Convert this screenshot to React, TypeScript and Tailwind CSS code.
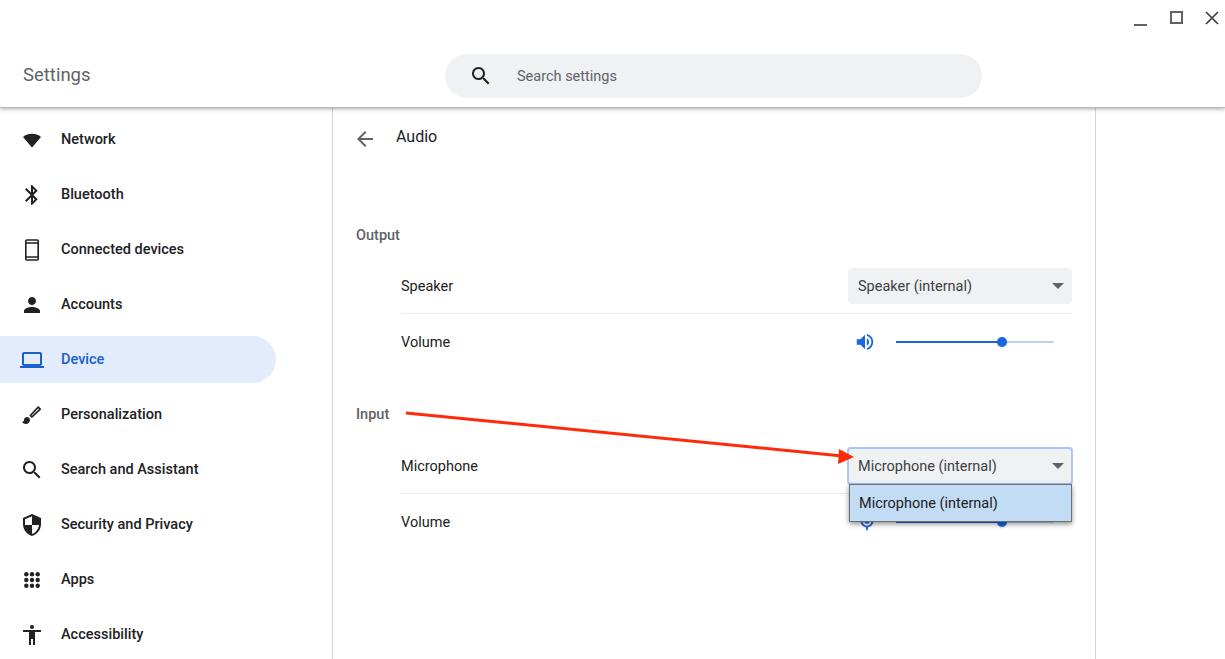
import type { ReactNode } from 'react';

const Icon = ({ d, className = 'w-6 h-6' }: { d: string; className?: string }) => (
  <svg viewBox="0 0 24 24" className={className} fill="currentColor">
    <path d={d} />
  </svg>
);

const searchPath = 'M15.5 14h-.79l-.28-.27C15.41 12.59 16 11.11 16 9.5 16 5.91 13.09 3 9.5 3S3 5.91 3 9.5 5.91 16 9.5 16c1.61 0 3.09-.59 4.23-1.57l.27.28v.79l5 4.99L20.49 19l-4.99-5zm-6 0C7.01 14 5 11.99 5 9.5S7.01 5 9.5 5 14 7.01 14 9.5 11.99 14 9.5 14z';
const volumePath = 'M3 9v6h4l5 5V4L7 9H3zm13.5 3c0-1.77-1.02-3.29-2.5-4.03v8.05c1.48-.73 2.5-2.25 2.5-4.02zM14 3.23v2.06c2.89.86 5 3.54 5 6.71s-2.11 5.85-5 6.71v2.06c4.01-.91 7-4.49 7-8.77s-2.99-7.86-7-8.77z';
const micPath = 'M12 14c1.66 0 3-1.34 3-3V5c0-1.66-1.34-3-3-3S9 3.34 9 5v6c0 1.66 1.34 3 3 3zm-1-9c0-.55.45-1 1-1s1 .45 1 1v6c0 .55-.45 1-1 1s-1-.45-1-1V5zm6 6c0 2.76-2.24 5-5 5s-5-2.24-5-5H5c0 3.53 2.61 6.43 6 6.92V21h2v-3.08c3.39-.49 6-3.39 6-6.92h-2z';

const navItems: { label: string; icon: ReactNode; active?: boolean }[] = [
  { label: 'Network', icon: <Icon d="M12 19.5 L3 9 C5.6 7 8.6 5.8 12 5.8 C15.4 5.8 18.4 7 21 9 Z" /> },
  { label: 'Bluetooth', icon: <Icon d="M17.71 7.71L12 2h-1v7.59L6.41 5 5 6.41 10.59 12 5 17.59 6.41 19 11 14.41V22h1l5.71-5.71-4.3-4.29 4.3-4.29zM13 5.83l1.88 1.88L13 9.59V5.83zm1.88 10.46L13 18.17v-3.76l1.88 1.88z" /> },
  {
    label: 'Connected devices',
    icon: (
      <svg viewBox="0 0 24 24" className="w-6 h-6" fill="none" stroke="currentColor" strokeWidth="1.6">
        <rect x="5.8" y="2" width="12.4" height="20" rx="1" />
        <path d="M6 5h12M6 19h12" />
      </svg>
    ),
  },
  { label: 'Accounts', icon: <Icon d="M12 12c2.21 0 4-1.79 4-4s-1.79-4-4-4-4 1.79-4 4 1.79 4 4 4zm0 2c-2.67 0-8 1.34-8 4v2h16v-2c0-2.66-5.33-4-8-4z" /> },
  { label: 'Device', active: true, icon: <Icon d="M20 18c1.1 0 1.99-.9 1.99-2L22 6c0-1.1-.9-2-2-2H4c-1.1 0-2 .9-2 2v10c0 1.1.9 2 2 2H0v2h24v-2h-4zM4 6h16v10H4V6z" /> },
  {
    label: 'Personalization',
    icon: (
      <svg viewBox="0 0 24 24" className="w-6 h-6" fill="currentColor">
        <path d="M7 14c-1.66 0-3 1.34-3 3 0 1.31-1.16 2-2 2 .92 1.22 2.49 2 4 2 2.21 0 4-1.79 4-4 0-1.66-1.34-3-3-3z" />
        <path d="M10.4 12.5 L18.2 4.2 L20.2 6.2 L11.9 14 Z" fill="none" stroke="currentColor" strokeWidth="1.7" strokeLinejoin="round" />
      </svg>
    ),
  },
  { label: 'Search and Assistant', icon: <Icon d={searchPath} /> },
  { label: 'Security and Privacy', icon: <Icon d="M12 1L3 5v6c0 5.55 3.84 10.74 9 12 5.16-1.26 9-6.45 9-12V5l-9-4zm0 10.99h7c-.53 4.12-3.28 7.79-7 8.94V12H5V6.3l7-3.11v8.8z" /> },
  {
    label: 'Apps',
    icon: (
      <svg viewBox="0 0 24 24" className="w-6 h-6" fill="currentColor">
        {[6.3, 12, 17.7].map((y) =>
          [6.3, 12, 17.7].map((x) => <circle key={`${x}-${y}`} cx={x} cy={y} r="2.2" />)
        )}
      </svg>
    ),
  },
  { label: 'Accessibility', icon: <Icon d="M12 2c1.1 0 2 .9 2 2s-.9 2-2 2-2-.9-2-2 .9-2 2-2zm9 7h-6v13h-2v-6h-2v6H9V9H3V7h18v2z" /> },
];

const Caret = () => (
  <span className="w-0 h-0 border-x-[6px] border-x-transparent border-t-[6px] border-t-[#5f6368]" />
);

const Slider = ({ icon, iconClass }: { icon: string; iconClass: string }) => (
  <div className="flex items-center w-[224px]">
    <div className={`w-[48px] text-[#1a66e0] ${iconClass}`}>
      <Icon d={icon} className="w-[22px] h-[22px]" />
    </div>
    <div className="relative w-[158px] h-[2px] bg-[#bcd2f5]">
      <div className="h-full w-[106px] bg-[#1a66e0]" />
      <div className="absolute left-[101px] top-[-4px] w-[10px] h-[10px] rounded-full bg-[#1a66e0] shadow-sm" />
    </div>
  </div>
);

export default function App() {
  return (
    <div className="relative h-[659px] w-[1225px] overflow-hidden bg-white text-[#202124] font-['Roboto',sans-serif] text-[14.5px]">
      <header className="relative z-10 h-[108px] border-b border-[#b9babc] bg-white shadow-[0_1px_4px_rgba(60,64,67,0.45)]">
        <div className="flex h-[54px] justify-end text-[#5f6368]">
          <div className="flex h-[38px] items-center gap-[15px] pr-[2px]">
            <svg viewBox="0 0 21 21" className="w-[21px] h-[21px]" fill="none" stroke="currentColor" strokeWidth="2">
              <path d="M4 16h13" />
            </svg>
            <svg viewBox="0 0 21 21" className="w-[21px] h-[21px]" fill="none" stroke="currentColor" strokeWidth="2">
              <rect x="5" y="3" width="11" height="11" />
            </svg>
            <svg viewBox="0 0 21 21" className="w-[21px] h-[21px]" fill="none" stroke="#3c4043" strokeWidth="1.7">
              <path d="M4 3l12 12M16 3L4 15" />
            </svg>
          </div>
        </div>
        <div className="flex h-[44px] items-center">
          <div className="w-[445px] pl-[23px] text-[18.5px] text-[#5f6368]">Settings</div>
          <div className="flex h-[44px] w-[537px] items-center rounded-full bg-[#f0f1f3] pl-[24px]">
            <Icon d={searchPath} className="w-6 h-6 text-[#202124]" />
            <span className="ml-[24px] pt-[1px] text-[#5f6368]">Search settings</span>
          </div>
        </div>
      </header>

      <div className="flex h-[551px]">
        <nav className="flex w-[332px] shrink-0 flex-col gap-2 pt-2">
          {navItems.map((item) => (
            <div
              key={item.label}
              className={`flex h-[47px] w-[276px] shrink-0 items-center rounded-r-full pl-[20px] ${
                item.active ? 'bg-[#e3ecfc] text-[#1a5fd0]' : ''
              }`}
            >
              <span className="flex w-[41px] shrink-0">{item.icon}</span>
              <span className="font-medium pt-[1px]">{item.label}</span>
            </div>
          ))}
        </nav>

        <main className="w-[764px] border-x border-[#d5d6d8] pl-[23px] pr-[23px]">
          <div className="flex h-[59px] items-center">
            <Icon d="M20 11H7.83l5.59-5.59L12 4l-8 8 8 8 1.41-1.41L7.83 13H20v-2z" className="w-6 h-6 -ml-[3px] text-[#5f6368] mt-[2px]" />
            <span className="ml-[19px] text-[16px] mb-[2px]">Audio</span>
          </div>

          <div className="mt-[59px] flex h-[20px] items-center font-medium text-[#5f6368]">Output</div>
          <div className="ml-[45px] mt-[13px]">
            <div className="flex h-[55px] items-center justify-between border-b border-[#e8eaed]">
              <span className="pt-[2px]">Speaker</span>
              <div className="flex h-[36px] w-[224px] items-center justify-between rounded-[4px] bg-[#f0f1f3] pl-[10px] pr-[8px] text-[#3c4043]">
                <span className="pt-[2px]">Speaker (internal)</span>
                <Caret />
              </div>
            </div>
            <div className="flex h-[55px] items-center justify-between">
              <span className="pt-[2px]">Volume</span>
              <Slider icon={volumePath} iconClass="pl-[6px]" />
            </div>
          </div>

          <div className="mt-[36px] flex h-[20px] items-center font-medium text-[#5f6368]">Input</div>
          <div className="ml-[45px] mt-[14px]">
            <div className="relative flex h-[55px] items-center justify-between border-b border-[#e8eaed]">
              <span className="pt-[2px]">Microphone</span>
              <div className="flex h-[38px] w-[226px] -mr-[1px] items-center justify-between rounded-[4px] border-2 border-[#a8c7fa] bg-[#f0f1f3] pl-[9px] pr-[7px] text-[#3c4043]">
                <span className="pt-[2px]">Microphone (internal)</span>
                <Caret />
              </div>
              <div className="absolute right-0 top-[45px] z-20 flex h-[38px] w-[223px] items-center border border-[#6b6f73] bg-[#c3dcf5] pl-[9px] text-[#202124] shadow-[0_2px_5px_rgba(0,0,0,0.45)]">
                <span className="pt-[1px]">Microphone (internal)</span>
              </div>
            </div>
            <div className="flex h-[55px] items-center justify-between">
              <span className="pt-[2px]">Volume</span>
              <Slider icon={micPath} iconClass="pl-[8px]" />
            </div>
          </div>
        </main>
      </div>

      {/* red annotation arrow drawn over the page */}
      <svg className="absolute left-0 top-0 z-30 pointer-events-none" width="1225" height="659">
        <path d="M406 413 L842 456" stroke="#ff2a0a" strokeWidth="3" fill="none" />
        <path d="M854 457 L839 449 L838 464 Z" fill="#ff2a0a" />
      </svg>
    </div>
  );
}
